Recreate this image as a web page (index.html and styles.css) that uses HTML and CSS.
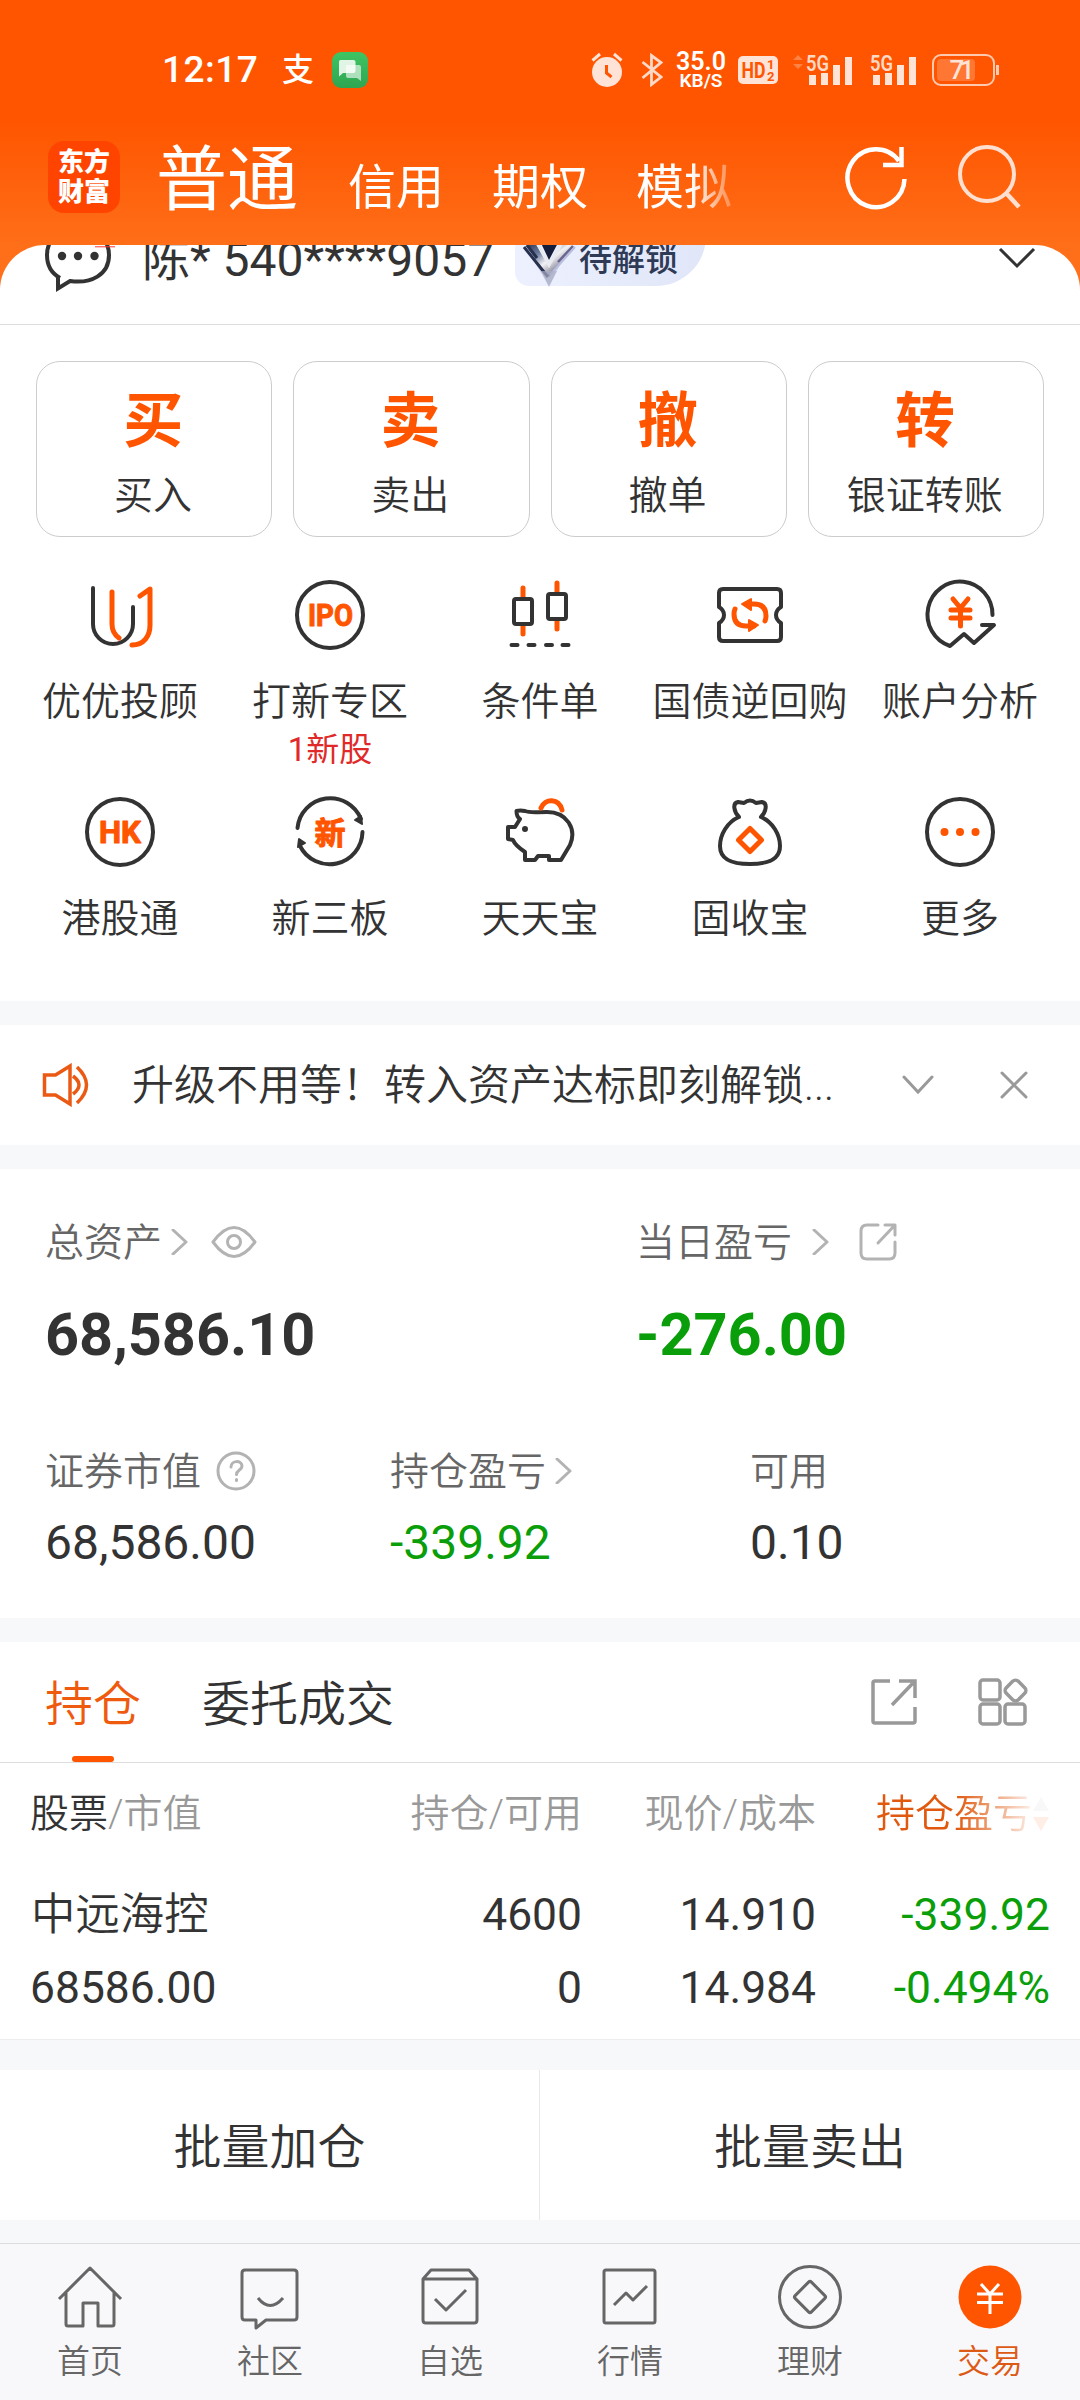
FILE: index.html
```html
<!DOCTYPE html>
<html lang="zh-CN">
<head>
    <meta charset="UTF-8">
    <meta name="viewport" content="width=device-width, initial-scale=1.0">
    <title>普通交易</title>
    <link rel="stylesheet" href="styles.css">
</head>
<body>
    <div class="app">
        <header class="header">
            <div class="status-bar">
                <span class="time">12:17</span>
                <span class="alipay">支</span>
                <svg class="sms" width="36" height="36" viewBox="0 0 36 36">
                    <defs>
                        <linearGradient id="smsBg" x1="0" y1="0" x2="0" y2="1">
                            <stop offset="0" stop-color="#3fc463"/>
                            <stop offset="1" stop-color="#2fa552"/>
                        </linearGradient>
                    </defs>
                    <rect width="36" height="36" rx="9" fill="url(#smsBg)"/>
                    <path d="M14 13h13q2 0 2 2v14l-4-3H16q-2 0-2-2z" fill="#fff" opacity=".6"/>
                    <path d="M8.500 8h13q2 0 2 2v9q0 2-2 2H11l-4 3.500V9.500q0-1.500 1.500-1.500z" fill="#fff" opacity=".85"/>
                </svg>

                <svg class="alarm" width="32" height="36" viewBox="0 0 32 36">
                    <circle cx="16" cy="21" r="15" fill="#ffe3d6"/>
                    <path d="M1.500 9.500L9 3M30.500 9.500L23 3" stroke="#ffe3d6" stroke-width="3"/>
                    <path d="M15.500 14v8l5 4" fill="none" stroke="#ff5500" stroke-width="3"/>
                </svg>
                <svg class="bluetooth" width="22" height="34" viewBox="0 0 22 34">
                    <path d="M1.500 9L20 24 10.500 31.500V2.500L20 9.500 1.500 25" fill="none" stroke="#ffd9c7" stroke-width="2.800"/>
                </svg>
                <div class="net-speed"><b>35.0</b><i>KB/S</i></div>
                <svg class="hd" width="40" height="28" viewBox="0 0 40 28">
                    <rect width="40" height="28" rx="5" fill="#ffe3d6"/>
                    <text x="3.500" y="22" font-size="22" font-weight="700" textLength="24" lengthAdjust="spacingAndGlyphs" fill="#ff5500">HD</text>
                    <text x="29" y="13" font-size="13" font-weight="700" fill="#ff5500">1</text>
                    <text x="29" y="25" font-size="13" font-weight="700" fill="#ff5500">2</text>
                </svg>
                <svg class="signal signal-first" width="60" height="34" viewBox="0 0 60 34">
                    <path d="M0 7l5-5 5 5zM0 11l5 5 5-5z" fill="#ff8346"/>
                    <text x="13" y="17.500" font-size="22" font-weight="600" textLength="23" lengthAdjust="spacingAndGlyphs" fill="#ffd9c7">5G</text>
                    <path d="M19.500 22v10M31.500 20v12M43.500 12v20M55.500 4v28" stroke="#ffe3d6" stroke-width="7"/>
                </svg>
                <svg class="signal" width="47" height="34" viewBox="13 0 47 34">
                    <text x="13" y="17.500" font-size="22" font-weight="600" textLength="23" lengthAdjust="spacingAndGlyphs" fill="#ffd9c7">5G</text>
                    <path d="M19.500 22v10M31.500 20v12M43.500 12v20M55.500 4v28" stroke="#ffe3d6" stroke-width="7"/>
                </svg>
                <svg class="battery" width="68" height="32" viewBox="0 0 68 32">
                    <rect x="1" y="1" width="61" height="30" rx="8" fill="none" stroke="#ffc9b0" stroke-width="2"/>
                    <rect x="5" y="5" width="38" height="22" rx="4" fill="#ff7733"/>
                    <path d="M65.500 11v10" stroke="#ffc9b0" stroke-width="3"/>
                    <text x="17.500" y="25" font-size="26" font-weight="500" textLength="25" fill="#ffe3d6">71</text>
                </svg>
            </div>

            <nav class="top-nav">
                <div class="logo"><span>东方</span><span>财富</span></div>
                <div class="account-tabs">
                    <span class="account-tab active">普通</span>
                    <span class="account-tab">信用</span>
                    <span class="account-tab">期权</span>
                    <span class="account-tab">模拟</span>
                </div>
                <svg class="refresh" width="66" height="66" viewBox="0 0 66 66">
                    <path d="M61.500 35A28.500 29 0 1 1 56 17" fill="none" stroke="#fff" stroke-width="4.500"/>
                    <path d="M58.500 3v18H40" fill="none" stroke="#fff" stroke-width="4.500"/>
                </svg>
                <svg class="search" width="66" height="68" viewBox="0 0 66 68">
                    <circle cx="31" cy="30" r="27" fill="none" stroke="#ffe0d0" stroke-width="4"/>
                    <path d="M50 49l13 14" stroke="#ffe0d0" stroke-width="4.500"/>
                </svg>
            </nav>
        </header>

        <main class="sheet">
            <div class="account">
                <svg class="comment" width="74" height="74" viewBox="0 0 74 74">
                    <path d="M19 58C10 53 6 44 6 35a31 29 0 1 1 62 0c0 20-18 29-39 26L17 68.500V56" fill="none" stroke="#333" stroke-width="4"/>
                    <g fill="#333"><circle cx="21" cy="36" r="4.200"/><circle cx="37" cy="36" r="4.200"/><circle cx="53.500" cy="36" r="4.200"/></g>
                    <path d="M54 26.800h20" stroke="#ff3b30" stroke-width="1"/>
                </svg>
                <span class="account-name">陈* 540****9057</span>
                <div class="level">
                    <svg width="56" height="54" viewBox="0 0 56 54">
                        <defs>
                            <linearGradient id="gem" x1="0" y1="0" x2="1" y2="1">
                                <stop offset="0" stop-color="#20263f"/>
                                <stop offset=".3" stop-color="#6d7d9e"/>
                                <stop offset=".5" stop-color="#f2f2f4"/>
                                <stop offset=".75" stop-color="#77778c"/>
                                <stop offset="1" stop-color="#c6caee"/>
                            </linearGradient>
                        </defs>
                        <path d="M14 30h26L28 53z" fill="#cfd4ea"/>
                        <path d="M5 13l8-5 15 26L44 8l10 6-26 30z" fill="url(#gem)"/>
                        <path d="M3 14l24 30M6 12l10 13" stroke="#27314f" stroke-width="3"/>
                        <path d="M19 8h19L28 27z" fill="#161d3a"/>
                        <path d="M16 9l12 23L41 9" fill="none" stroke="#e9eaf0" stroke-width="3"/>
                        <path d="M37 29L52 13" stroke="#6a6590" stroke-width="2.500"/>
                        <path d="M29 42L54 14" stroke="#b9bde0" stroke-width="2"/>
                        <path d="M20 38h16L28 54z" fill="#a9aec4" opacity=".7"/>
                    </svg>
                    <span>待解锁</span>
                </div>
                <svg class="account-more" width="38" height="22" viewBox="0 0 38 22">
                    <path d="M2 2l17 17L36 2" fill="none" stroke="#333" stroke-width="3"/>
                </svg>
            </div>

            <div class="trade-cards">
                <div class="trade-card"><strong>买</strong><span>买入</span></div>
                <div class="trade-card"><strong>卖</strong><span>卖出</span></div>
                <div class="trade-card"><strong>撤</strong><span>撤单</span></div>
                <div class="trade-card"><strong>转</strong><span>银证转账</span></div>
            </div>

            <div class="menu">
                <div class="menu-item">
                    <svg class="menu-icon" viewBox="0 0 78 78">
                        <path d="M12 12v36a20 20 0 0 0 40 0V31"/>
                        <path class="hot" d="M31 16v32q0 9 7 14M51 69c12 0 18-9 18-20V13L59 20"/>
                    </svg>
                    <span>优优投顾</span>
                </div>
                <div class="menu-item">
                    <svg class="menu-icon" viewBox="0 0 78 78">
                        <circle cx="39" cy="39" r="33"/>
                        <text x="17" y="50" font-size="31" textLength="45" lengthAdjust="spacingAndGlyphs">IPO</text>
                    </svg>
                    <span>打新专区</span>
                    <em>1新股</em>
                </div>
                <div class="menu-item">
                    <svg class="menu-icon" viewBox="0 0 78 78">
                        <path class="hot" d="M22 12v10M22 50v8M56 7v10M56 44v9"/>
                        <rect x="13" y="23" width="18" height="25" rx="2"/>
                        <rect x="47" y="18" width="18" height="25" rx="2"/>
                        <path d="M10.500 69h6M27.500 69h6M45 69h6M61.500 69h6"/>
                    </svg>
                    <span>条件单</span>
                </div>
                <div class="menu-item">
                    <svg class="menu-icon" viewBox="0 0 78 78">
                        <path d="M12 13h54q4 0 4 4v14q-5 3-5 8t5 8v14q0 4-4 4H12q-4 0-4-4V47q5-3 5-8t-5-8V17q0-4 4-4z"/>
                        <path class="hot" d="M35 28h8q12 0 12 12 0 3-1 5M43 50h-8q-12 0-12-12 0-3 1-5"/>
                        <path class="hot-fill" d="M40 23v11l-9-6zM38 44v11l9-6z"/>
                    </svg>
                    <span>国债逆回购</span>
                </div>
                <div class="menu-item">
                    <svg class="menu-icon" viewBox="0 0 78 78">
                        <path d="M71.500 39A32.500 33 0 1 0 29 70l14-12 10 9 20-18H61"/>
                        <path class="hot" d="M32 23l7.500 9 7.500-9M30 34h19M30 42h19M39.500 33v17"/>
                    </svg>
                    <span>账户分析</span>
                </div>
                <div class="menu-item">
                    <svg class="menu-icon" viewBox="0 0 78 78">
                        <circle cx="39" cy="39" r="33"/>
                        <text x="18" y="50" font-size="31" textLength="42" lengthAdjust="spacingAndGlyphs">HK</text>
                    </svg>
                    <span>港股通</span>
                </div>
                <div class="menu-item">
                    <svg class="menu-icon" viewBox="0 0 78 78">
                        <path d="M6.500 35A33 33 0 0 1 70 26M71.500 39A33 33 0 0 1 9 53"/>
                        <path class="dark-fill" d="M64 27l6-4 1 8zM14 50l-6-4-1 8z"/>
                        <text x="23.500" y="50.500" font-size="31">新</text>
                    </svg>
                    <span>新三板</span>
                </div>
                <div class="menu-item">
                    <svg class="menu-icon" viewBox="0 0 78 78">
                        <path d="M46 19C34 19 29 20 24 18q-5-1-8.500 0 0 6 3.500 8l-5 8H7v12l5 1c2 5 6 8 12 12v8h10l3-4h11v4h12l9-15c7-16-3-33-23-33z"/>
                        <path class="hot" d="M40 15c4-10 18-10 21 2"/>
                        <circle class="dark-fill" cx="24" cy="36" r="2"/>
                    </svg>
                    <span>天天宝</span>
                </div>
                <div class="menu-item">
                    <svg class="menu-icon" viewBox="0 0 78 78">
                        <path d="M28 24c-5-5-7-14-1-15l6 1q6-5 12 0l6-1c6 1 4 10-1 15C62 29 69 42 69 53c0 14-12 18-30 18S9 67 9 53c0-11 7-24 19-29z"/>
                        <path class="hot" d="M39 35.500L50.500 47 39 58.500 27.500 47z"/>
                    </svg>
                    <span>固收宝</span>
                </div>
                <div class="menu-item">
                    <svg class="menu-icon" viewBox="0 0 78 78">
                        <circle cx="39" cy="39" r="33"/>
                        <circle class="hot-fill" cx="23.500" cy="39" r="3"/>
                        <circle class="hot-fill" cx="39" cy="39" r="3"/>
                        <circle class="hot-fill" cx="54.500" cy="39" r="3"/>
                    </svg>
                    <span>更多</span>
                </div>
            </div>
        </main>

        <section class="notice">
            <svg width="48" height="44" viewBox="0 0 48 44">
                <path d="M2.500 12h11L28 3v38l-14.500-9h-11z" fill="none" stroke="#ea5a14" stroke-width="3.500"/>
                <path d="M31 13q12 9 0 18M35 4q19 18 0 36" fill="none" stroke="#ea5a14" stroke-width="3.500"/>
            </svg>
            <p>升级不用等！转入资产达标即刻解锁...</p>
            <svg class="notice-open" width="32" height="20" viewBox="0 0 32 20">
                <path d="M2 2l14 15L30 2" fill="none" stroke="#999" stroke-width="3" stroke-linecap="round"/>
            </svg>
            <svg class="notice-close" width="28" height="28" viewBox="0 0 28 28">
                <path d="M2 2l24 24M26 2L2 26" stroke="#999" stroke-width="3" stroke-linecap="round"/>
            </svg>
        </section>

        <section class="assets">
            <div class="assets-main">
                <div class="asset">
                    <div class="asset-label">
                        <span>总资产</span>
                        <svg class="arrow" width="18" height="26" viewBox="0 0 18 26"><path d="M2 1l13 12L2 25"/></svg>
                        <svg class="eye" width="46" height="34" viewBox="0 0 46 34">
                            <path d="M2 17Q23-12 44 17 23 46 2 17z"/>
                            <circle cx="23" cy="17" r="6.500"/>
                        </svg>
                    </div>
                    <div class="asset-total">68,586.10</div>
                </div>
                <div class="asset">
                    <div class="asset-label">
                        <span>当日盈亏</span>
                        <svg class="arrow arrow-far" width="18" height="26" viewBox="0 0 18 26"><path d="M2 1l13 12L2 25"/></svg>
                        <svg class="share" width="40" height="40" viewBox="0 0 40 40">
                            <path d="M20 3H9Q3 3 3 9v22q0 6 6 6h22q6 0 6-6V20M20 21L37 3M27 3h10v10"/>
                        </svg>
                    </div>
                    <div class="asset-total down">-276.00</div>
                </div>
            </div>
            <div class="assets-sub">
                <div class="asset">
                    <div class="asset-label">
                        <span>证券市值</span>
                        <svg class="help" width="40" height="40" viewBox="0 0 40 40">
                            <circle cx="20" cy="20" r="18"/>
                            <path d="M15 16c0-7 11-7 11-1 0 4-5.500 4-5.500 8.500M20.500 28.500v1"/>
                        </svg>
                    </div>
                    <div class="asset-value">68,586.00</div>
                </div>
                <div class="asset">
                    <div class="asset-label">
                        <span>持仓盈亏</span>
                        <svg class="arrow" width="18" height="26" viewBox="0 0 18 26"><path d="M2 1l13 12L2 25"/></svg>
                    </div>
                    <div class="asset-value down">-339.92</div>
                </div>
                <div class="asset">
                    <div class="asset-label"><span>可用</span></div>
                    <div class="asset-value">0.10</div>
                </div>
            </div>
        </section>

        <section class="positions">
            <div class="tabs">
                <div class="tab active">持仓</div>
                <div class="tab">委托成交</div>
                <svg class="tab-icon" width="48" height="48" viewBox="0 0 48 48">
                    <path d="M20 3H5q-2 0-2 2v38q0 2 2 2h38q2 0 2-2V29M22 27L43 5M29 3h16v17"/>
                </svg>
                <svg class="tab-icon" width="52" height="50" viewBox="0 0 52 50">
                    <rect x="3" y="3" width="20" height="20" rx="3"/>
                    <rect x="3" y="27" width="20" height="20" rx="3"/>
                    <rect x="28" y="27" width="20" height="20" rx="3"/>
                    <rect x="30" y="5" width="17" height="17" rx="4" transform="rotate(45 38.500 13.500)"/>
                </svg>
            </div>

            <div class="table">
                <div class="row row-head">
                    <span><b>股票</b>/市值</span>
                    <span>持仓/可用</span>
                    <span>现价/成本</span>
                    <span class="sorted">持仓盈亏<svg width="18" height="36" viewBox="0 0 18 36"><path d="M1 15L9 1l8 14z" fill="#bbb"/><path d="M1 21l8 14 8-14z" fill="#ff5500"/></svg></span>
                </div>
                <div class="row">
                    <span class="stock-name">中远海控</span>
                    <span>4600</span>
                    <span>14.910</span>
                    <span class="down">-339.92</span>
                </div>
                <div class="row">
                    <span>68586.00</span>
                    <span>0</span>
                    <span>14.984</span>
                    <span class="down">-0.494%</span>
                </div>
            </div>
        </section>

        <div class="batch">
            <div class="batch-btn">批量加仓</div>
            <div class="batch-btn">批量卖出</div>
        </div>

        <footer class="tab-bar">
            <div class="bar-item">
                <svg viewBox="0 0 66 66">
                    <path d="M2 34L33 3l31 31M9 28v31q0 2 2 2h15V38h15v23h14q2 0 2-2V28"/>
                </svg>
                <span>首页</span>
            </div>
            <div class="bar-item">
                <svg viewBox="0 0 66 66">
                    <path d="M8 5h49q3 0 3 3v44q0 3-3 3H29l-10 8v-8H8q-3 0-3-3V8q0-3 3-3zM21 33q12 15 25 0"/>
                </svg>
                <span>社区</span>
            </div>
            <div class="bar-item">
                <svg viewBox="0 0 66 66">
                    <path d="M6 14l8-9h38l8 9v41q0 3-3 3H9q-3 0-3-3zM6 14h54M18 34l11 11 20-20"/>
                </svg>
                <span>自选</span>
            </div>
            <div class="bar-item">
                <svg viewBox="0 0 66 66">
                    <rect x="7" y="5" width="51" height="53" rx="2"/>
                    <path d="M17 40l12-12 7 7 14-14"/>
                </svg>
                <span>行情</span>
            </div>
            <div class="bar-item">
                <svg viewBox="0 0 66 66">
                    <circle cx="33" cy="32" r="30.500"/>
                    <rect x="21.500" y="20.500" width="23" height="23" rx="2" transform="rotate(45 33 32)"/>
                </svg>
                <span>理财</span>
            </div>
            <div class="bar-item active">
                <svg viewBox="0 0 66 66">
                    <circle class="dot" cx="33" cy="32" r="31.500"/>
                    <path d="M24 19l9 10 9-10M20 29h26M20 37.500h26M33 29v20"/>
                </svg>
                <span>交易</span>
            </div>
        </footer>
    </div>
</body>
</html>
```

FILE: styles.css
```css
:root {
    --primary-color: #ff5500;
    --text-color: #333333;
    --label-color: #666666;
    --muted-color: #999999;
    --down-color: #0a9e0a;
    --gap-color: #f7f8fa;
}

* {
    box-sizing: border-box;
    margin: 0;
    padding: 0;
}

body {
    background-color: var(--gap-color);
    color: var(--text-color);
    font-family: Roboto, "Noto Sans CJK SC", sans-serif;
    font-weight: 350;
    font-size: 39px;
    line-height: 1.2;
}

svg {
    flex: none;
    display: block;
}

b, i, em, strong {
    font-style: normal;
    font-weight: inherit;
}

.app {
    width: 1080px;
    height: 2400px;
    display: flex;
    flex-direction: column;
    background: linear-gradient(#ff5500 120px, #ff6e18 245px, #ff7320 300px) no-repeat 0 0 / 100% 300px;
    overflow: hidden;
}

/* status bar */
.header {
    height: 245px;
    flex: none;
    color: #fff;
}

.status-bar {
    height: 106px;
    padding: 34px 80px 0 162px;
    display: flex;
    align-items: center;
}

.time {
    width: 94px;
    font-size: 37px;
    font-weight: 500;
    letter-spacing: 0.5px;
}

.alipay {
    width: 34px;
    margin-left: 26px;
    font-size: 32px;
    font-weight: 500;
}

.sms {
    margin-left: 16px;
}

.alarm {
    margin-left: 223px;
    margin-bottom: 2px;
}

.bluetooth {
    margin-left: 18px;
}

.net-speed {
    width: 52px;
    margin-left: 12px;
    display: flex;
    flex-direction: column;
    align-items: center;
    font-size: 25px;
    font-weight: 600;
    line-height: 20px;
}

.net-speed i {
    font-size: 19px;
    line-height: 17px;
}

.hd {
    margin-left: 11px;
}

.signal {
    margin-left: 17px;
}

.signal-first {
    margin-left: 15px;
}

.battery {
    margin-left: 15px;
}

/* top navigation */
.top-nav {
    height: 139px;
    padding-left: 48px;
    display: flex;
    align-items: flex-start;
}

.logo {
    width: 72px;
    height: 72px;
    margin-top: 35px;
    padding-top: 6px;
    border-radius: 16px;
    background-color: #ff4400;
    display: flex;
    flex-direction: column;
    align-items: center;
    font-size: 26px;
    font-weight: 900;
    line-height: 30px;
}

.account-tabs {
    width: 600px;
    margin: 22px 0 0 36px;
    display: flex;
    align-items: baseline;
    gap: 48px;
    line-height: 100px;
    -webkit-mask-image: linear-gradient(90deg, #000 535px, transparent 590px);
    mask-image: linear-gradient(90deg, #000 535px, transparent 590px);
}

.account-tab {
    padding-top: 2px;
    font-size: 48px;
    font-weight: 400;
}

.account-tab.active {
    margin-right: 2px;
    font-size: 71px;
}

.refresh {
    margin: 38px 0 0 87px;
}

.search {
    margin: 38px 0 0 47px;
}

/* white sheet */
.sheet {
    height: 756px;
    flex: none;
    background-color: #fff;
    border-radius: 45px 45px 0 0;
    overflow: hidden;
}

.account {
    height: 130px;
    margin-top: -50px;
    padding: 0 44px 0 41px;
    display: flex;
    align-items: center;
    border-bottom: 1px solid #ddd;
}

.account-name {
    margin-left: 27px;
    font-size: 48px;
    font-weight: 400;
}

.comment {
    margin-top: -6px;
}

.level {
    height: 53px;
    width: 191px;
    margin-left: 21px;
    padding-left: 6px;
    display: flex;
    align-items: center;
    gap: 2px;
    background: linear-gradient(90deg, #edf1ff, #e0e6f8);
    border-radius: 14px 0 50px 14px;
    color: #2f3a56;
    font-size: 33px;
    font-weight: 500;
}

.account-more {
    margin-left: auto;
    margin-bottom: 4px;
}

.trade-cards {
    padding: 36px 36px 0;
    display: flex;
    gap: 21px;
}

.trade-card {
    flex: 1;
    height: 176px;
    padding: 18px 2px 0 0;
    border: 1px solid #ccc;
    border-radius: 24px;
    display: flex;
    flex-direction: column;
    align-items: center;
    line-height: 50px;
}

.trade-card strong {
    color: var(--primary-color);
    font-size: 60px;
    font-weight: 600;
    line-height: 84px;
    margin-bottom: 7px;
}

.menu {
    padding: 39px 15px 0;
    display: grid;
    grid-template-columns: repeat(5, 1fr);
    grid-auto-rows: 217px;
}

.menu-item {
    display: flex;
    flex-direction: column;
    align-items: center;
    line-height: 50px;
    white-space: nowrap;
}

.menu-item em {
    color: #e02a2a;
    font-size: 33px;
    font-weight: 400;
    line-height: 44px;
    margin-top: 1px;
}

.menu-icon {
    width: 78px;
    height: 78px;
    margin-bottom: 23px;
    fill: none;
    stroke: #333;
    stroke-width: 4;
    stroke-linecap: round;
    stroke-linejoin: round;
}

.menu-icon .hot {
    stroke: var(--primary-color);
    stroke-width: 5;
}

.menu-icon .hot-fill {
    fill: var(--primary-color);
    stroke: var(--primary-color);
    stroke-width: 2;
}

.menu-icon .dark-fill {
    fill: #333;
    stroke-width: 2;
}

.menu-icon text {
    fill: var(--primary-color);
    stroke: var(--primary-color);
    stroke-width: 1;
    font-weight: 700;
}

/* notice */
.notice {
    height: 120px;
    flex: none;
    margin-top: 24px;
    padding: 0 52px 0 42px;
    display: flex;
    align-items: center;
    background-color: #fff;
}

.notice p {
    margin-left: 42px;
    padding-top: 2px;
    font-size: 42px;
    white-space: nowrap;
}

.notice-open {
    margin-left: auto;
}

.notice-close {
    margin-left: 66px;
}

/* assets */
.assets {
    height: 449px;
    flex: none;
    margin-top: 24px;
    padding: 46px 45px 0;
    background-color: #fff;
}

.assets-main {
    height: 229px;
    display: grid;
    grid-template-columns: 591px 1fr;
}

.assets-sub {
    display: grid;
    grid-template-columns: 345px 360px 1fr;
}

.asset-label {
    height: 54px;
    display: flex;
    align-items: center;
    color: var(--label-color);
}

.asset-label span {
    padding-top: 2px;
}

.asset-label svg {
    fill: none;
    stroke: #b3b3b3;
    stroke-width: 3;
    stroke-linecap: round;
    stroke-linejoin: round;
}

.asset-label .arrow {
    margin-left: 9px;
}

.asset-label .arrow-far {
    margin-left: 20px;
}

.eye {
    margin-left: 22px;
}

.share {
    margin-left: 28px;
}

.help {
    margin-left: 15px;
}

.asset-total {
    margin-top: 31px;
    font-size: 59.4px;
    font-weight: 700;
}

.asset-value {
    margin-top: 16px;
    font-size: 48px;
    font-weight: 400;
}

.down {
    color: var(--down-color);
}

/* positions */
.positions {
    height: 398px;
    flex: none;
    margin-top: 24px;
    background-color: #fff;
    border-bottom: 1px solid #ececec;
}

.tabs {
    height: 121px;
    padding: 0 51px 0 45px;
    display: flex;
    align-items: center;
    border-bottom: 1px solid #ddd;
    font-size: 48px;
}

.tab {
    height: 120px;
    margin-right: 61px;
    display: flex;
    flex-direction: column;
    align-items: center;
    line-height: 114px;
    padding-top: 6px;
}

.tab.active {
    color: #ee5a0e;
}

.tab.active::after {
    content: "";
    width: 42px;
    height: 6px;
    margin-top: -6px;
    border-radius: 3px;
    background-color: var(--primary-color);
}

.tab-icon {
    fill: none;
    stroke: var(--muted-color);
    stroke-width: 3.5;
    margin-left: auto;
}

.tab-icon + .tab-icon {
    margin-left: 59px;
}

.table {
    padding: 15px 30px 0 30px;
}

.row {
    height: 73px;
    display: grid;
    grid-template-columns: 250px 302px 234px 1fr;
    align-items: center;
    text-align: right;
    font-size: 44.4px;
    font-weight: 400;
    white-space: nowrap;
}

.row span:first-child {
    text-align: left;
}

.row-head {
    margin-bottom: 28px;
    color: var(--muted-color);
    font-size: 39px;
    font-weight: 350;
}

.row-head b {
    color: var(--text-color);
}

.stock-name {
    font-weight: 350;
    padding-left: 1px;
}

.sorted {
    display: flex;
    align-items: center;
    justify-content: flex-end;
    color: #e0590f;
    -webkit-mask-image: linear-gradient(90deg, #000 60%, rgba(0, 0, 0, 0.1) 92%);
    mask-image: linear-gradient(90deg, #000 60%, rgba(0, 0, 0, 0.1) 92%);
}

.batch {
    height: 150px;
    flex: none;
    margin-top: 30px;
    display: grid;
    grid-template-columns: 1fr 1fr;
    background-color: #fff;
}

.batch-btn {
    padding-top: 5px;
    display: flex;
    align-items: center;
    justify-content: center;
    font-size: 48px;
}

.batch-btn:first-child {
    border-right: 1px solid #e8e8e8;
}

/* bottom bar */
.tab-bar {
    height: 157px;
    flex: none;
    margin-top: 23px;
    padding-top: 21px;
    display: grid;
    grid-template-columns: repeat(6, 1fr);
    background-color: #f8f8fb;
    border-top: 1px solid #ddd;
}

.bar-item {
    display: flex;
    flex-direction: column;
    align-items: center;
    color: var(--label-color);
    font-size: 33px;
    line-height: 44px;
}

.bar-item svg {
    width: 66px;
    height: 66px;
    margin-bottom: 9px;
    fill: none;
    stroke: #666;
    stroke-width: 3;
    stroke-linejoin: round;
}

.bar-item.active {
    color: #dd5a14;
}

.bar-item.active svg {
    stroke: #fff;
}

.bar-item .dot {
    fill: var(--primary-color);
    stroke: none;
}
```
